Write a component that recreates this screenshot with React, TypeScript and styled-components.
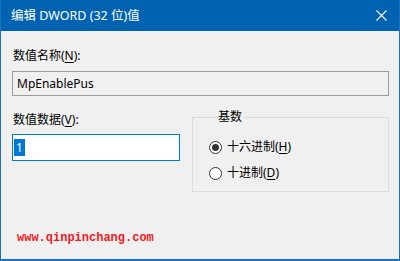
import React from "react";
import styled, { createGlobalStyle } from "styled-components";

const GlobalStyle = createGlobalStyle`
  html, body {
    margin: 0;
    padding: 0;
    background: #f0f0f0;
  }
  body {
    font-family: "Noto Sans", "Noto Sans CJK SC", sans-serif;
  }
`;

const App: React.FC = () => {
  return (
    <>
      <GlobalStyle />
      <Window>
        <TitleBar>
          <Title>编辑 DWORD (32 位)值</Title>
          <CloseButton>
            <svg width="11" height="11" viewBox="0 0 11 11">
              <path d="M0.5 0.5 L10.5 10.5 M10.5 0.5 L0.5 10.5" stroke="#fff" strokeWidth="1.1" />
            </svg>
          </CloseButton>
        </TitleBar>
        <Body>
          <Label>
            数值名称(<u>N</u>):
          </Label>
          <NameBox>MpEnablePus</NameBox>
          <DataRow>
            <DataColumn>
              <Label>
                数值数据(<u>V</u>):
              </Label>
              <ValueBox>
                <Selected>1</Selected>
              </ValueBox>
            </DataColumn>
            <Group>
              <Legend>基数</Legend>
              <RadioRow>
                <Radio checked />
                <RadioText>
                  十六进制(<u>H</u>)
                </RadioText>
              </RadioRow>
              <RadioRow>
                <Radio />
                <RadioText>
                  十进制(<u>D</u>)
                </RadioText>
              </RadioRow>
            </Group>
          </DataRow>
          <Watermark>www.qinpinchang.com</Watermark>
        </Body>
      </Window>
    </>
  );
};

const Window = styled.div`
  width: 400px;
  height: 261px;
  box-sizing: border-box;
  border: 1px solid #1a6fc0;
  border-top: 0;
  border-bottom-width: 2px;
  background: #f0f0f0;
  display: flex;
  flex-direction: column;
  overflow: hidden;
`;

const TitleBar = styled.div`
  height: 31px;
  margin: 0 -1px;
  background: #0063b1;
  display: flex;
  align-items: center;
  justify-content: space-between;
  padding: 0 12px 0 11px;
`;

const Title = styled.div`
  color: #fff;
  font-size: 12.5px;
  line-height: 16px;
`;

const CloseButton = styled.div`
  display: flex;
  align-items: center;
  margin-right: 1px;
`;

const Body = styled.div`
  display: flex;
  flex-direction: column;
  padding: 17px 10px 0 11px;
  color: #000;
  font-size: 12px;
`;

const Label = styled.div`
  line-height: 16px;
  font-size: 12px;
  padding-left: 1px;

  u {
    text-decoration-thickness: 1px;
    text-underline-offset: 2px;
  }
`;

const NameBox = styled.div`
  margin-top: 7px;
  height: 25px;
  box-sizing: border-box;
  border: 1px solid #9a9a9a;
  background: #f0f0f0;
  padding-left: 4px;
  display: flex;
  align-items: center;
  font-size: 12px;
`;

const DataRow = styled.div`
  display: flex;
  gap: 12px;
  margin-top: 13px;
`;

const DataColumn = styled.div`
  width: 168px;
  display: flex;
  flex-direction: column;
  padding-top: 3px;
`;

const ValueBox = styled.div`
  margin-top: 6px;
  height: 27px;
  box-sizing: border-box;
  border: 1px solid #0078d7;
  background: #fff;
  padding-left: 1px;
  display: flex;
  align-items: center;
`;

const Selected = styled.span`
  background: #0078d7;
  color: #fff;
  font-size: 12px;
  line-height: 17px;
  padding: 0 2px 0 2px;
`;

const Group = styled.fieldset`
  flex: 1;
  margin: 0;
  padding: 9px 0 6px 16px;
  border: 1px solid #dcdcdc;
  min-width: 0;
  height: 83px;
  box-sizing: border-box;
`;

const Legend = styled.legend`
  margin-left: 7px;
  padding: 0 2px;
  font-size: 12px;
  line-height: 16px;
`;

const RadioRow = styled.div`
  display: flex;
  align-items: center;
  height: 26px;
  gap: 5px;
`;

const Radio = styled.span<{ checked?: boolean }>`
  width: 13px;
  height: 13px;
  box-sizing: border-box;
  border-radius: 50%;
  border: 1px solid #333;
  background: #fff;
  display: flex;
  align-items: center;
  justify-content: center;

  &::after {
    content: "";
    width: 7px;
    height: 7px;
    border-radius: 50%;
    background: #333;
    display: ${(p) => (p.checked ? "block" : "none")};
  }
`;

const RadioText = styled.span`
  font-size: 12px;
  line-height: 16px;

  u {
    text-decoration-thickness: 1px;
    text-underline-offset: 2px;
  }
`;

const Watermark = styled.div`
  margin-top: 38px;
  padding-left: 5px;
  color: #f01c24;
  font-family: "Liberation Mono", monospace;
  font-weight: bold;
  font-size: 12px;
  line-height: 16px;
`;

export default App;
